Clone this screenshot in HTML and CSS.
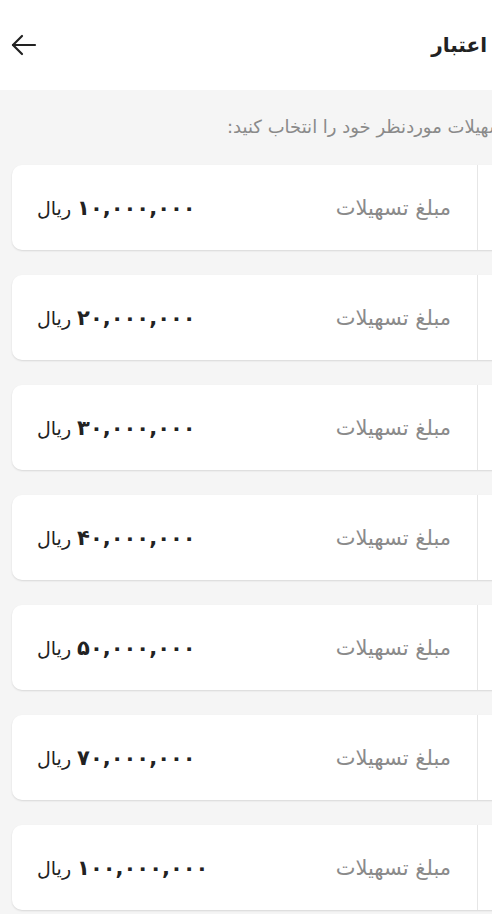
FILE: index.html
```html
<!DOCTYPE html>
<html lang="fa" dir="rtl">
<head>
  <meta charset="UTF-8">
  <meta name="viewport" content="width=device-width, initial-scale=1.0">
  <title>اعتبار</title>
  <link rel="stylesheet" href="styles.css">
</head>
<body>
  <div class="screen">
    <div class="header">
      <span class="title">اعتبار</span>
      <span class="back">
        <svg width="26" height="26" viewBox="0 0 26 26" fill="none" stroke="#222" stroke-width="2.2" stroke-linecap="round" stroke-linejoin="round">
          <path d="M24 13H2"/>
          <path d="M11 4L2 13L11 22"/>
        </svg>
      </span>
    </div>

    <div class="content">
      <p class="hint">تسهیلات موردنظر خود را انتخاب کنید:</p>

      <div class="loan-list">
        <div class="loan-card">
          <div class="loan-side"></div>
          <div class="loan-body">
            <span class="loan-label">مبلغ تسهیلات</span>
            <span class="loan-amount"><b>۱۰,۰۰۰,۰۰۰</b> ریال</span>
          </div>
        </div>
        <div class="loan-card">
          <div class="loan-side"></div>
          <div class="loan-body">
            <span class="loan-label">مبلغ تسهیلات</span>
            <span class="loan-amount"><b>۲۰,۰۰۰,۰۰۰</b> ریال</span>
          </div>
        </div>
        <div class="loan-card">
          <div class="loan-side"></div>
          <div class="loan-body">
            <span class="loan-label">مبلغ تسهیلات</span>
            <span class="loan-amount"><b>۳۰,۰۰۰,۰۰۰</b> ریال</span>
          </div>
        </div>
        <div class="loan-card">
          <div class="loan-side"></div>
          <div class="loan-body">
            <span class="loan-label">مبلغ تسهیلات</span>
            <span class="loan-amount"><b>۴۰,۰۰۰,۰۰۰</b> ریال</span>
          </div>
        </div>
        <div class="loan-card">
          <div class="loan-side"></div>
          <div class="loan-body">
            <span class="loan-label">مبلغ تسهیلات</span>
            <span class="loan-amount"><b>۵۰,۰۰۰,۰۰۰</b> ریال</span>
          </div>
        </div>
        <div class="loan-card">
          <div class="loan-side"></div>
          <div class="loan-body">
            <span class="loan-label">مبلغ تسهیلات</span>
            <span class="loan-amount"><b>۷۰,۰۰۰,۰۰۰</b> ریال</span>
          </div>
        </div>
        <div class="loan-card">
          <div class="loan-side"></div>
          <div class="loan-body">
            <span class="loan-label">مبلغ تسهیلات</span>
            <span class="loan-amount"><b>۱۰۰,۰۰۰,۰۰۰</b> ریال</span>
          </div>
        </div>
      </div>
    </div>
  </div>
</body>
</html>
```

FILE: styles.css
```css
/* page */
html, body {
  margin: 0;
  height: 100%;
  overflow: hidden;
}

body {
  background: #f5f5f5;
  color: #222;
  font-family: "DejaVu Sans", "Noto Sans", sans-serif;
  direction: ltr;
}

.screen {
  width: 492px;
  height: 914px;
  overflow: hidden;
  direction: rtl;
}

/* header */
.header {
  height: 90px;
  background: #fff;
  display: flex;
  justify-content: space-between;
  align-items: center;
  padding: 0 5px 0 11px;
}

.title {
  font-size: 20px;
  font-weight: bold;
  color: #222;
}

.back {
  display: flex;
  align-items: center;
}

/* list */
.content {
  width: 498px;
  padding: 0 0 0 12px;
  margin-right: -18px;
}

.hint {
  margin: 0;
  padding: 25px 0 0;
  height: 75px;
  box-sizing: border-box;
  font-size: 18px;
  line-height: 24px;
  color: #8a8a8a;
  white-space: nowrap;
}

.loan-list {
  display: flex;
  flex-direction: column;
  gap: 25px;
}

.loan-card {
  height: 85px;
  background: #fff;
  border-radius: 10px;
  box-shadow: 0 1px 2px rgba(0, 0, 0, 0.12);
  display: flex;
}

.loan-side {
  width: 32px;
  border-left: 1px solid #e6e6e6;
}

.loan-body {
  flex: 1;
  display: flex;
  justify-content: space-between;
  align-items: center;
  padding: 0 26px 0 25px;
}

.loan-label {
  font-size: 21px;
  color: #8a8a8a;
}

.loan-amount {
  font-size: 19px;
  color: #222;
}

.loan-amount b {
  font-size: 21px;
}
```
